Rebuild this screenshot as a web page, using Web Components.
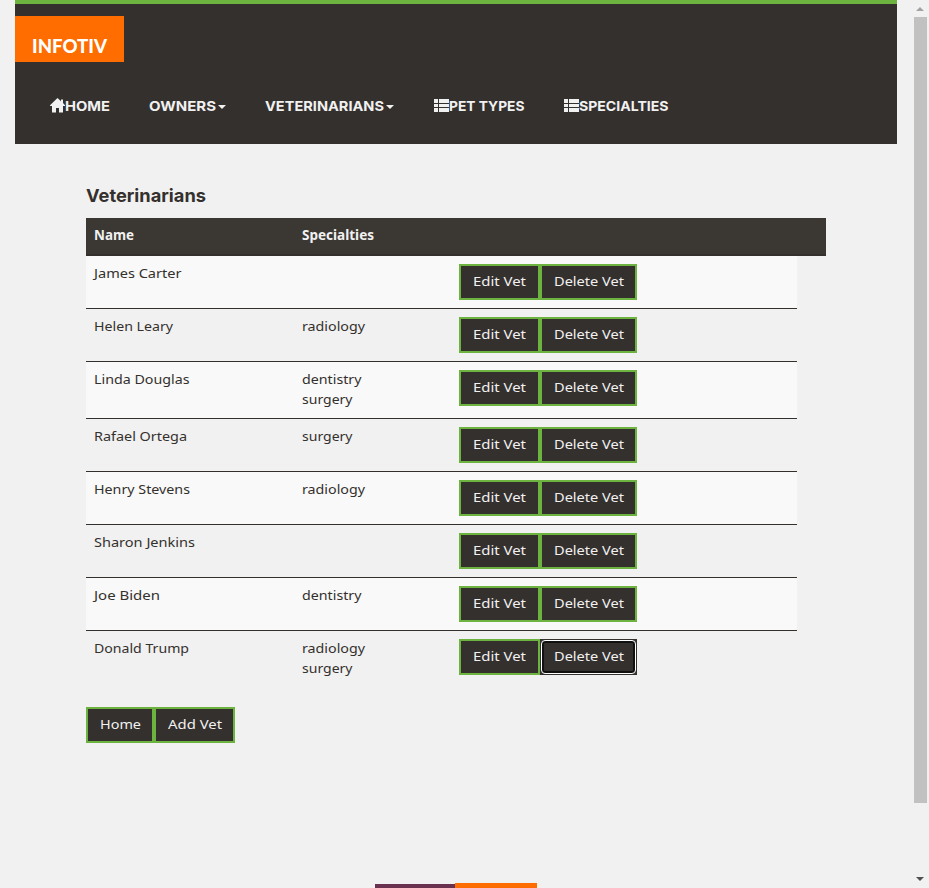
<!DOCTYPE html>
<html lang="en"><head><meta charset="utf-8"><title>Veterinarians</title>
<style>
html,body{margin:0;height:888px;overflow:hidden;background:#f1f1f1}
body{font:13.4px/20px "Noto Sans","Open Sans",sans-serif;color:#34302d}
</style></head><body><vet-app></vet-app>
<script>
const define=(name,html,after)=>customElements.define(name,class extends HTMLElement{
  connectedCallback(){
    if(this.shadowRoot)return;
    const root=this.attachShadow({mode:'open'});
    root.innerHTML=typeof html==='function'?html(this):html;
    if(after)after(this,root);
  }
});

// Text widened so that its run takes exactly the width given in "w".
define('fitted-text',e=>`<style>:host{display:inline-block;white-space:nowrap;text-align:left;width:${e.getAttribute('w')}px}span{display:inline-block;transform-origin:0 50%}</style><span><slot></slot></span>`,(e,root)=>{
  const s=root.querySelector('span');
  s.style.transform=`scaleX(${(+e.getAttribute('w')/s.getBoundingClientRect().width).toFixed(4)})`;
});

define('home-icon',`<style>:host{display:block;width:15px;height:15px;margin-top:-1px}svg{display:block}</style>
<svg width="15" height="15" viewBox="0 0 15 15"><path fill="#f1f1f1" d="M7.5 0 11 3.2V1.5h2V5l2 2.2V8h-2v6.5H9V10H6v4.5H2V8H0v-.8z"/></svg>`);
define('list-icon',`<style>:host{display:block;width:15px;height:15px;margin-top:-1px}svg{display:block}</style>
<svg width="15" height="15" viewBox="0 0 15 15" fill="#f1f1f1" shape-rendering="crispEdges"><path d="M0 1h4v4H0zM5 1h10v4H5zM0 6h4v3H0zM5 6h10v3H5zM0 10h4v4H0zM5 10h10v4H5z"/></svg>`);

define('nav-item',`<style>:host{display:flex;align-items:center;height:20px;font:700 13.6px/20px Inter,sans-serif;color:#f1f1f1}
.caret{display:none;margin:1px 0 0 2px;border:4px solid transparent;border-top-color:#f1f1f1;border-bottom:0}
:host([menu]) .caret{display:block}</style><slot name="icon"></slot><slot></slot><i class="caret"></i>`);

define('brand-logo',`<style>:host{display:block;box-sizing:border-box;width:109px;height:46px;padding:19px 0 0 17px;background:#ff6c00;color:#fff;font:900 18.5px/22px Lato,sans-serif}</style><fitted-text w="75">INFOTIV</fitted-text>`);

define('site-header',`<style>:host{display:block;box-sizing:border-box;width:882px;height:144px;margin-left:15px;padding-top:12px;background:#34302d;border-top:4px solid #6db33f}
nav{display:flex;padding:34px 0 0 35px}nav>*{flex:none}
.a{width:99px}.b{width:116px}.c{width:169px}.d{width:130px}</style>
<brand-logo></brand-logo>
<nav>
<nav-item class="a"><home-icon slot="icon"></home-icon><fitted-text w="45">HOME</fitted-text></nav-item>
<nav-item class="b" menu><fitted-text w="67">OWNERS</fitted-text></nav-item>
<nav-item class="c" menu><fitted-text w="119">VETERINARIANS</fitted-text></nav-item>
<nav-item class="d"><list-icon slot="icon"></list-icon><fitted-text w="75.5">PET TYPES</fitted-text></nav-item>
<nav-item><list-icon slot="icon"></list-icon><fitted-text w="89.5">SPECIALTIES</fitted-text></nav-item>
</nav>`);

define('vet-button',e=>`<style>:host{display:block;width:${e.getAttribute('width')}px;height:36px}
button{box-sizing:border-box;width:100%;height:36px;margin:0;padding:0 0 2px 11.5px;display:flex;align-items:center;background:#34302d;border:2px solid #6db33f;color:#f1f1f1;font:inherit;position:relative}
:host([active]) button{border-color:#34302d}
:host([active]) button::after{content:"";position:absolute;inset:-1px;border:1px solid #fff;border-radius:4px;box-shadow:inset 0 0 0 2px #101010}</style>
<button><fitted-text w="${e.getAttribute('text')}">${e.getAttribute('label')}</fitted-text></button>`);

define('vet-row',e=>{
  const specs=(e.getAttribute('specs')||'').split(',').filter(Boolean);
  const widths={radiology:63,surgery:50.5,dentistry:59.5};
  return `<style>:host{display:grid;grid-template-columns:208px 157px auto;align-items:start;box-sizing:border-box;width:711px;padding:8px 0 8px 8px;border-bottom:1px solid #34302d}
:host(:nth-child(even)){background:#f9f9f9}:host(:last-child){border:0}
.t{margin-top:-1px;padding-bottom:1px}.t>*{display:block}.a{display:flex}</style>
<div class="t"><fitted-text w="${e.getAttribute('w')}">${e.getAttribute('name')}</fitted-text></div>
<div class="t">${specs.map(s=>`<fitted-text w="${widths[s]}">${s}</fitted-text>`).join('')}</div>
<div class="a"><vet-button width="81" text="53" label="Edit Vet"></vet-button><vet-button width="97" text="70" label="Delete Vet"${e.hasAttribute('active')?' active':''}></vet-button></div>`;
});

const vets=[['James Carter',87.5,''],['Helen Leary',79,'radiology'],['Linda Douglas',95.5,'dentistry,surgery'],['Rafael Ortega',93,'surgery'],['Henry Stevens',96,'radiology'],['Sharon Jenkins',101,''],['Joe Biden',66,'dentistry'],['Donald Trump',95,'radiology,surgery']];
define('vet-table',`<style>:host{display:block;width:740px}
header{display:grid;grid-template-columns:207.5px auto;box-sizing:border-box;height:38px;padding:7px 8px;background:#3b3834;border-bottom:2px solid #34302d;color:#f1f1f1;font-weight:700}</style>
<section><header><fitted-text w="40">Name</fitted-text><fitted-text w="72">Specialties</fitted-text></header>${vets.map((v,i)=>`<vet-row name="${v[0]}" w="${v[1]}" specs="${v[2]}"${i===7?' active':''}></vet-row>`).join('')}</section>`);

define('page-scrollbar',`<style>:host{display:grid;grid-template-rows:17px 786px 1fr;justify-items:center;width:17px;height:888px;box-sizing:border-box;padding-right:1px;background:#f1f1f1}
i{width:0;border:4px solid transparent}
.up{border-bottom-color:#a3a3a3;border-top:0;height:0;margin-top:7px}.thumb{width:13px;background:#c1c1c1}
.down{border-top-color:#505050;border-bottom:0;height:0;align-self:end;margin-bottom:7px}</style><i class="up"></i><div class="thumb"></div><i class="down"></i>`);

define('footer-logos',`<style>:host{display:flex;align-items:flex-end;width:162px;height:5px}.p{width:80px;height:4px;background:#6a304f}.o{width:82px;height:5px;background:#ff6c00}</style><div class="p"></div><div class="o"></div>`);

define('vet-app',`<style>:host{display:flex;width:929px;height:888px}
.page{width:912px;display:flex;flex-direction:column;background:#f1f1f1}
main{padding:42px 0 0 86px;flex:1}
h2{margin:0 0 12px;font:700 18px/20px Inter,sans-serif;height:20px}
.actions{display:flex;margin-top:20px}
footer-logos{margin-left:375px}</style>
<div class="page"><site-header></site-header>
<main><h2><fitted-text w="120">Veterinarians</fitted-text></h2><vet-table></vet-table>
<div class="actions"><vet-button width="68" text="41" label="Home"></vet-button><vet-button width="81" text="54" label="Add Vet"></vet-button></div></main>
<footer-logos></footer-logos></div><page-scrollbar></page-scrollbar>`);
</script></body></html>
